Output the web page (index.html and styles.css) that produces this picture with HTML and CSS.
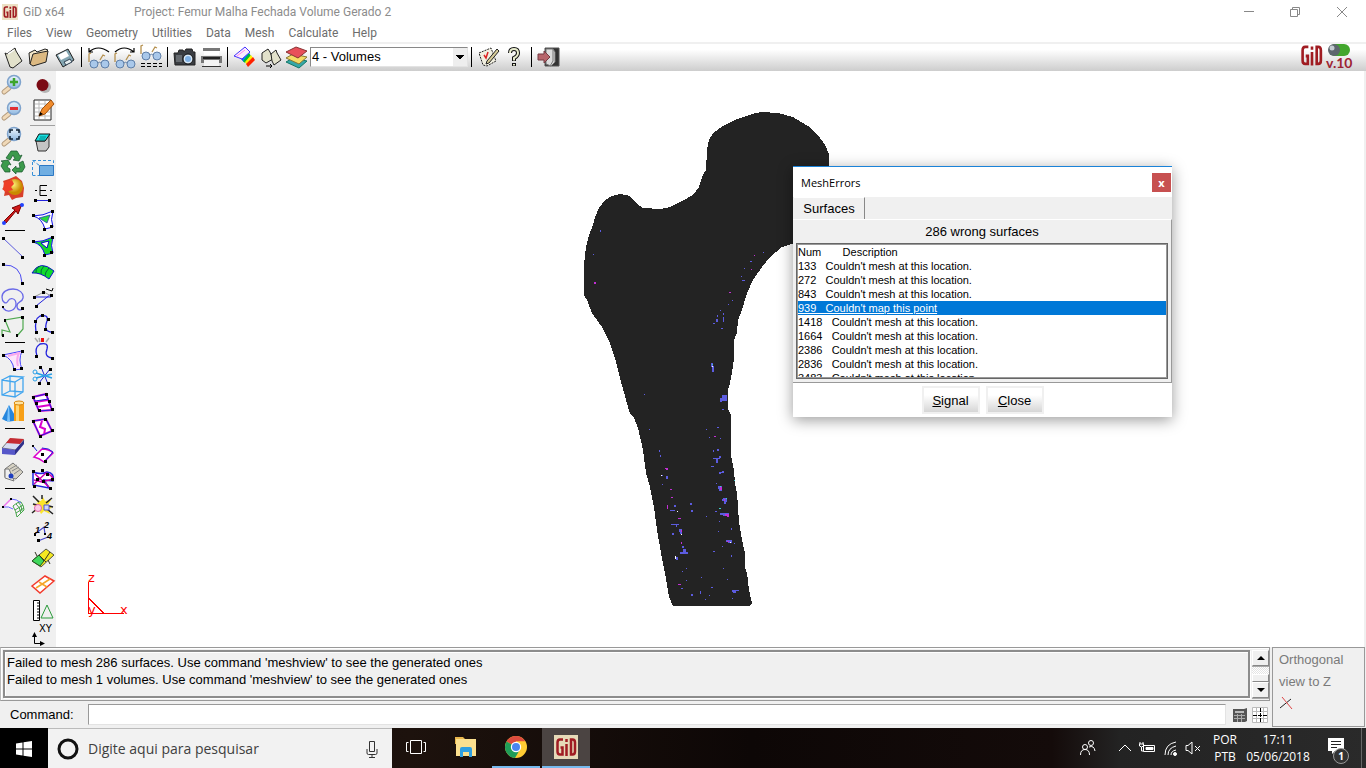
FILE: index.html
```html
<!DOCTYPE html>
<html lang="en">
<head>
  <meta charset="UTF-8">
  <meta name="viewport" content="width=device-width, initial-scale=1.0">
  <title>GiD x64</title>
  <link rel="stylesheet" href="styles.css">
</head>
<body>

<!-- Shared symbols -->
<svg class="defs" aria-hidden="true">
  <defs>
    <linearGradient id="lens" x1="0" y1="0" x2="0" y2="1">
      <stop offset="0" stop-color="#eef6fd"/><stop offset="1" stop-color="#8fb8e0"/>
    </linearGradient>
    <radialGradient id="gold" cx=".4" cy=".35">
      <stop offset="0" stop-color="#fff27a"/><stop offset="1" stop-color="#c98a00"/>
    </radialGradient>
    <symbol id="magnifier" viewBox="0 0 26 26">
      <path d="M4 21l5-4" stroke="#b39a7c" stroke-width="5" stroke-linecap="round"/>
      <path d="M4 21l5-4" stroke="#f0d9b8" stroke-width="3" stroke-linecap="round"/>
      <circle cx="14" cy="11" r="6.500" fill="url(#lens)" stroke="#7fa3cc" stroke-width="1.500"/>
    </symbol>
    <symbol id="glasses" viewBox="0 0 26 26">
      <path d="M3 15V7l2-1M14 13l3-5 2 1" fill="none" stroke="#b5904e" stroke-width="1.300"/>
      <circle cx="8" cy="17" r="4" fill="#a9c8ea" stroke="#5f7fa8"/>
      <circle cx="19" cy="17" r="4" fill="#a9c8ea" stroke="#5f7fa8"/>
      <path d="M12 16q1.500-1.500 3 0" fill="none" stroke="#5f7fa8"/>
    </symbol>
    <symbol id="gid" viewBox="0 0 24 24">
      <path d="M9 4.500H6q-2.500 0-2.500 3v9q0 3 2.500 3h2.500v-7H6.500M12.500 9v12M12.500 4v3M17 4.500v15h1.500q2.500 0 2.500-3v-9q0-3-2.500-3z" fill="none" stroke="#a01c22" stroke-width="2.500"/>
    </symbol>
  </defs>
</svg>

<header class="titlebar">
  <svg class="app-icon" viewBox="0 0 24 24"><rect width="24" height="24" fill="#ece0c4"/><use href="#gid"/></svg>
  <span class="app-name">GiD x64</span>
  <span class="project">Project: Femur Malha Fechada Volume Gerado 2</span>
  <div class="window-buttons">
    <button aria-label="Minimize"><svg viewBox="0 0 12 12"><path d="M1 5.500h10"/></svg></button>
    <button aria-label="Restore"><svg viewBox="0 0 12 12"><path d="M1.500 3.500h7v7h-7zM3.500 3.500v-2h7v7h-2"/></svg></button>
    <button aria-label="Close"><svg viewBox="0 0 12 12"><path d="M1 1l10 10M11 1L1 11"/></svg></button>
  </div>
</header>

<nav class="menubar">
  <a href="#">Files</a>
  <a href="#">View</a>
  <a href="#">Geometry</a>
  <a href="#">Utilities</a>
  <a href="#">Data</a>
  <a href="#">Mesh</a>
  <a href="#">Calculate</a>
  <a href="#">Help</a>
</nav>

<div class="toolbar">
  <button class="tool" aria-label="New"><svg viewBox="0 0 26 26"><path d="M5 9l2 1 8-6 1 3 6 10-9 7-3-1z" fill="#e2e1cb" stroke="#222"/><path d="M8 10l6-4" stroke="#fff" stroke-width="1.500"/></svg></button>
  <button class="tool" aria-label="Open"><svg viewBox="0 0 26 26"><path d="M4 20L3 9l6-3 2 2 8-3 3 1-2 2" fill="#f3e6c8" stroke="#222"/><path d="M4 20l3-10 15-3-2 11-13 4z" fill="#dcb982" stroke="#222"/></svg></button>
  <button class="tool" aria-label="Save"><svg viewBox="0 0 26 26"><path d="M4 11l12-6 6 11-11 7z" fill="#84a6b2" stroke="#222"/><path d="M6 11l8-4 3 5-8 4z" fill="#fff"/><path d="M12 18l6-3 2 3-6 3z" fill="#e6eef0" stroke="#345"/></svg></button>
  <i class="divider"></i>
  <button class="tool" aria-label="View previous"><svg viewBox="0 0 26 26"><use href="#glasses" y="3"/><path d="M3 8q9-8 20 0M3 4v4h4" fill="none" stroke="#000" stroke-width="1.200"/></svg></button>
  <button class="tool" aria-label="View next"><svg viewBox="0 0 26 26"><use href="#glasses" y="3"/><path d="M3 8q9-8 19 0M22 4v4h-4" fill="none" stroke="#000" stroke-width="1.200"/></svg></button>
  <button class="tool" aria-label="View list"><svg viewBox="0 0 26 26"><use href="#glasses" y="-5"/><path d="M3 19.500h21M3 22.500h21" stroke="#000" stroke-dasharray="4 2"/></svg></button>
  <i class="divider"></i>
  <button class="tool" aria-label="Snapshot"><svg viewBox="0 0 26 26"><path d="M2 9h4l1-3h4l1 2 2-3h6l1 3h2v13H3z" fill="#3a3d42" stroke="#222"/><path d="M4 11h6v7H4z" fill="#666b70"/><circle cx="16" cy="15" r="5" fill="#dbe9f6" stroke="#111"/><circle cx="16" cy="15" r="3" fill="#7fb0e4"/></svg></button>
  <button class="tool" aria-label="Print"><svg viewBox="0 0 26 26"><path d="M6 4h15v7H6z" fill="#fff"/><path d="M5 4h17v3H5z" fill="#777"/><path d="M3 12h21v7h-3v-3H6v3H3z" fill="#777"/><path d="M5 13h17v2H5z" fill="#222"/><path d="M6 16h15v6H6z" fill="#f4f4f4"/><path d="M4 22.500h19" stroke="#333"/></svg></button>
  <i class="divider"></i>
  <button class="tool" aria-label="Contour"><svg viewBox="0 0 26 26"><path d="M14 9l4 3q-5 6-6 6l-3-3z" fill="#21d"/><path d="M15 8l3 2-6 8-2-2z" fill="#08f"/><path d="M17 9l2 3-6 7-2-2z" fill="#0b3"/><path d="M19 11l2 3-6 7-2-3z" fill="#fe0"/><path d="M21 13l2 3-7 7-2-3z" fill="#f20"/><path d="M2 12l11-9 5 5-8 7z" fill="#fdeafd" stroke="#43f"/><path d="M5 12l8-6" stroke="#f8e"/></svg></button>
  <button class="tool" aria-label="Copy"><svg viewBox="0 0 26 26"><path d="M4 9l6-4 2 3 3 7-7 4-4-3z" fill="#e2e1cb" stroke="#222"/><path d="M13 10l5-4 1 3 4 7-7 5-2-4z" fill="#e2e1cb" stroke="#222"/><path d="M8 22h6M12 20l2 2-2 2" fill="none" stroke="#000"/></svg></button>
  <button class="tool" aria-label="Layers"><svg viewBox="0 0 26 26"><path d="M2 18l7-4 14 3-8 7z" fill="#35a7a8" stroke="#176"/><path d="M2 14l7-4 14 3-8 7z" fill="#f5dc66" stroke="#873"/><path d="M2 8l10-5 11 4-9 7z" fill="#e8505a" stroke="#833"/></svg></button>
  <select class="layer-select" aria-label="Layer"><option>4 - Volumes</option></select>
  <i class="divider"></i>
  <button class="tool" aria-label="Preferences"><svg viewBox="0 0 26 26"><path d="M3 9l12-5 5 13-9 5-4-1z" fill="#f1efe0" stroke="#222" stroke-dasharray="2 1"/><path d="M8 11l2 3 2-6" fill="none" stroke="#d22" stroke-width="1.500"/><path d="M21 5L11 17l-1 3 3-1L23 7z" fill="#d6cb98" stroke="#222"/></svg></button>
  <button class="tool" aria-label="Help"><svg viewBox="0 0 26 26"><path d="M8 9q0-4 4-4t4 4q0 3-4 5v3M12 19v3" fill="none" stroke="#111" stroke-width="4"/><path d="M8 9q0-4 4-4t4 4q0 3-4 5v2.500M12 20v1.500" fill="none" stroke="#e8eccd" stroke-width="2"/></svg></button>
  <i class="divider"></i>
  <button class="tool" aria-label="Exit"><svg viewBox="0 0 26 26"><path d="M9 4h14v18H9z" fill="#333" stroke="#555"/><path d="M10 5h7l2 3v10l-4 4-5-2z" fill="#ddd" stroke="#777"/><path d="M17 5v12l-3 5" fill="none" stroke="#777"/><path d="M2 10h6V7l6 6-6 6v-3H2z" fill="#b7656b" stroke="#743b42"/></svg></button>
  <div class="brand">
    <svg viewBox="0 0 56 28"><svg width="24" height="26" viewBox="1 1 23 23" preserveAspectRatio="none"><use href="#gid" width="24" height="24"/></svg>
      <rect x="29" y="1" width="21" height="12" rx="6" fill="#42a62c"/><circle cx="34" cy="7" r="6" fill="#5d666d"/><circle cx="32" cy="5" r="2.500" fill="#c4ccd1"/>
      <text x="26" y="25">v.10</text></svg>
  </div>
</div>

<main class="workspace">
  <aside class="palette">
    <div class="palette-col">
      <button class="tool" aria-label="Zoom in"><svg viewBox="0 0 26 26"><use href="#magnifier"/><path d="M10 11h8M14 7v8" stroke="#3da52c" stroke-width="2.500"/></svg></button>
      <button class="tool" aria-label="Zoom out"><svg viewBox="0 0 26 26"><use href="#magnifier"/><path d="M10 11.500h8" stroke="#e03034" stroke-width="3"/></svg></button>
      <button class="tool" aria-label="Zoom frame"><svg viewBox="0 0 26 26"><use href="#magnifier"/><path d="M10 10V7h3M16 7h3v3M19 13v3h-3M13 16h-3v-3" fill="none" stroke="#123" stroke-width="1.500"/></svg></button>
      <button class="tool" aria-label="Redraw"><svg viewBox="0 0 26 26"><g fill="#3c9a4c" stroke="#14552a" stroke-width=".7"><path d="M6 9l5-7h6l3 5 2-1-3 6-6-1 2-1-2-4-3 5z"/><path d="M23 12l2 6-3 5h-6v2l-4-4 4-4v2h4l-1-5z"/><path d="M10 23H5l-4-6 2-4-2-1 7-1 3 5-2-1-2 3 3 2z"/></g></svg></button>
      <button class="tool" aria-label="Render"><svg viewBox="0 0 26 26"><path d="M3 6l6-2 7-3 6 5 2 7-1 9-7 1-4 2-3-5-5 1 1-5-3-2 3-3z" fill="#d8402a"/><circle cx="15" cy="12" r="8" fill="url(#gold)"/><path d="M4 7l8-2 2 4-3 3 2 3-8 2-2-3z" fill="#ee3f28"/></svg></button>
      <button class="tool" aria-label="Rotate"><svg viewBox="0 0 26 26"><path d="M4 20L15 9l-3-2 10-4-4 10-2-3L6 22z" fill="#d01818" stroke="#700"/><circle cx="4" cy="22" r="2" fill="#24f"/><circle cx="22" cy="4" r="2" fill="#24f"/></svg></button>
      <hr>
      <button class="tool" aria-label="Line"><svg viewBox="0 0 26 26"><path d="M3 3l20 19" stroke="#5b5bdc"/><path d="M2 2h3v3H2zM21 21h3v3h-3z"/></svg></button>
      <button class="tool" aria-label="Arc"><svg viewBox="0 0 26 26"><path d="M3 4q18-1 19 18" fill="none" stroke="#4a4af0"/><path d="M2 2h3v3H2zM21 21h3v3h-3z"/></svg></button>
      <button class="tool" aria-label="Curve"><svg viewBox="0 0 26 26"><path d="M3 21C8 27 16 23 16 17S10 10 8 14 2 15 2 10 7 2 13 2s11 4 10 9-6 3-6 8 4 4 6 3" fill="none" stroke="#6a6ae8" stroke-width="1.300"/><path d="M2 19h2v2H2zM21 20h3v3h-3z"/></svg></button>
      <button class="tool" aria-label="Polyline"><svg viewBox="0 0 26 26"><path d="M17 23l6-7V4L5 7l5 12-8-2v6" fill="none" stroke="#4fa84f" stroke-width="1.200"/><path d="M2 21h2v3H2zM16 21h2v3h-2zM4 6h2v3H4zM21 3h3v3h-3z"/></svg></button>
      <hr>
      <button class="tool" aria-label="Surface"><svg viewBox="0 0 26 26"><path d="M3 8l19-4q-4 9 0 18l-8 1Q13 12 3 8z" fill="#fce6fb"/><path d="M3 8l19-4q-4 9 0 18l-8 1Q13 12 3 8z" fill="none" stroke="#44f"/><path d="M8 9l11-3q-3 6-1 13" fill="none" stroke="#f8a8ee" stroke-width="2"/><path d="M2 7h3v3H2zM21 3h3v3h-3zM13 21h3v3h-3zM20 20h3v3h-3z"/></svg></button>
      <button class="tool" aria-label="Volume"><svg viewBox="0 0 26 26"><path d="M2 7l13 2v15L2 22zM2 7l8-4 13 1-8 5M23 4v15l-8 5M10 3v15l13 1M10 18l-8 4" fill="none" stroke="#41a5ee" stroke-width="1.300"/></svg></button>
      <button class="tool" aria-label="Solids"><svg viewBox="0 0 26 26"><path d="M2 20L9 6l8 14q-7 5-15 0z" fill="#2686dd"/><path d="M8 9l1-3 1 16-3 1z" fill="#7cc3fa"/><path d="M14 4h10v18H14z" fill="#f7a018"/><path d="M16 4h3v18h-3z" fill="#ffd676"/><ellipse cx="19" cy="4" rx="5" ry="2" fill="#ffe3a0" stroke="#d8860b"/></svg></button>
      <hr>
      <button class="tool" aria-label="Delete"><svg viewBox="0 0 26 26"><path d="M2 15l8-9 14 1-8 10z" fill="#d7dcf2" stroke="#777"/><path d="M10 5l14 1-4 5-14-1z" fill="#c62c33"/><path d="M2 15l13 2v5L2 21z" fill="#5657c9"/><path d="M15 17l9-10v4l-9 11z" fill="#30318c"/></svg></button>
      <button class="tool" aria-label="Label"><svg viewBox="0 0 26 26"><path d="M5 10l8-6 10 9-7 7-11-2z" fill="#d6d2c4" stroke="#777"/><path d="M10 10l7-4M12 12l7-4M14 15l7-5" stroke="#888"/><path d="M5 10h4l5 12-9-3z" fill="#eee" stroke="#777"/><circle cx="11" cy="17" r="2.500" fill="#1f3fc0"/></svg></button>
      <hr>
      <button class="tool" aria-label="Generate mesh"><svg viewBox="0 0 26 26"><path d="M3 14l8-8q7 0 13 9l-7 9Q11 13 3 14z" fill="#fdf1fc"/><path d="M13 13q6-5 8-4 3 4 3 8l-7 7q-1-6-4-11zM15 17l8-5M16 20l8-5M16 11q4 3 5 9M18 9q4 3 4 9" fill="none" stroke="#43a548"/><path d="M3 14q6-1 10 2M11 6q6 0 10 4" fill="none" stroke="#66f"/><path d="M3 14l8-8" stroke="#e7e" stroke-width="1.500"/><path d="M2 13h2v2H2zM10 5h2v2h-2z"/></svg></button>
    </div>
    <div class="palette-col">
      <button class="tool" aria-label="Point"><svg viewBox="0 0 26 26"><circle cx="15" cy="16" r="6" fill="#b5b5b5"/><circle cx="12.500" cy="14" r="6" fill="#7b0b14"/></svg></button>
      <button class="tool" aria-label="Edit"><svg viewBox="0 0 26 26"><path d="M4 3h17v20H4z" fill="#fff" stroke="#222"/><path d="M5 7h15M5 11h15M5 15h15M5 19h15M9 4v18M15 4v18" stroke="#bbb"/><path d="M9 19l3-7L21 3l3 4-9 10z" fill="#f08b2c" stroke="#a3510a"/><path d="M9 19l1-4 3 2z"/></svg></button>
      <hr class="light">
      <button class="tool" aria-label="Book"><svg viewBox="0 0 26 26"><path d="M6 12h9l4-6v12l-3 4H8z" fill="#c4c4c4" stroke="#333"/><path d="M9 5h11l-5 7H5z" fill="#17dfe0" stroke="#111"/><path d="M10 8h6M9 10h6" stroke="#088"/></svg></button>
      <button class="tool" aria-label="Selection"><svg viewBox="0 0 26 26"><path d="M2.500 20V5.500h21V12M2.500 5.500l7 5M2.500 20.500h8" fill="none" stroke="#3590da" stroke-dasharray="3 2"/><path d="M9.500 10.500h14v10h-14z" fill="#70aee2" stroke="#2c78c4"/></svg></button>
      <button class="tool" aria-label="Dimension"><svg viewBox="0 0 26 26"><path d="M17 4.500H10v10h7M10 9.500h6M5 9.500h2M20 9.500h2" fill="none" stroke="#000"/><path d="M5 19.500h15" stroke="#22d"/><path d="M4 18h3v3H4zM18 18h3v3h-3z"/></svg></button>
      <button class="tool" aria-label="Hole"><svg viewBox="0 0 26 26"><path d="M3 9q10 0 20-5-3 9 0 16l-8 2Q12 11 3 9z" fill="#fff" stroke="#11e"/><path d="M9 11l11-3-3 8z" fill="#27d83b" stroke="#22c" stroke-width=".7"/><path d="M2 7h3v3H2zM21 3h3v3h-3zM13 21h3v3h-3zM20 18h3v3h-3z"/></svg></button>
      <button class="tool" aria-label="Fill hole"><svg viewBox="0 0 26 26"><path d="M3 9q10 0 20-5-3 9 0 16l-8 2Q12 11 3 9z" fill="#17d82b" stroke="#11e"/><path d="M11 10l8-2-2 7z" fill="#fff" stroke="#00c"/><path d="M2 7h3v3H2zM21 3h3v3h-3zM13 21h3v3h-3zM20 18h3v3h-3z"/></svg></button>
      <button class="tool" aria-label="Parallel surface"><svg viewBox="0 0 26 26"><path d="M2 14Q10 0 24 12l-5 8Q10 13 2 14z" fill="#0fdb2c" stroke="#11c"/><path d="M9 7q-4 4-3 7M14 7q-4 4-3 8M19 9q-4 4-4 8" fill="none" stroke="#064"/></svg></button>
      <button class="tool" aria-label="Move point"><svg viewBox="0 0 26 26"><path d="M4 12h17M6 21L21 9" fill="none" stroke="#22d"/><path d="M4 12l10-5 7 4" fill="none" stroke="#999"/><path d="M16 4l6 2 1-3" fill="none" stroke="#000"/><path d="M3 11h3v3H3zM12 6h3v3h-3zM20 9h3v3h-3zM5 20h3v3H5z"/></svg></button>
      <button class="tool" aria-label="Nurbs line"><svg viewBox="0 0 26 26"><path d="M6 21q-2-13 4-16 9-2 7 5-4 11 5 11" fill="none" stroke="#22d" stroke-width="1.300"/><path d="M4 9h3v3H4zM5 20h3v3H5zM11 3h3v3h-3zM17 7h3v3h-3zM14 17h3v3h-3zM21 20h3v3h-3z"/></svg></button>
      <button class="tool" aria-label="Split line"><svg viewBox="0 0 26 26"><path d="M5 1l3 4M9 1l1 4M19 1l-3 4" stroke="#aaa" stroke-width="1.500"/><path d="M7 19q-3-8 3-12 9-2 7 5-3 8 5 9" fill="none" stroke="#22d" stroke-width="1.300"/><path d="M11 1h3v4h-3z" fill="#e11"/><path d="M5 18h3v3H5zM21 20h3v3h-3z"/></svg></button>
      <button class="tool" aria-label="Divide"><svg viewBox="0 0 26 26"><path d="M11 4l7 17M20 6L9 20" stroke="#22c"/><path d="M6 10l16 5M6 15l16-4" stroke="#2aa0e8" stroke-width="1.500"/><circle cx="5" cy="9" r="2" fill="none" stroke="#2aa0e8"/><circle cx="5" cy="16" r="2" fill="none" stroke="#2aa0e8"/><path d="M9 3h3v3H9zM19 5h3v3h-3zM8 19h3v3H8zM17 19h3v3h-3z"/></svg></button>
      <button class="tool" aria-label="Strips"><svg viewBox="0 0 26 26"><path d="M3 8l13-3 6 16-13 1zM5 13l13-2M7 18l13-2" fill="#fff" stroke="#d0c" stroke-width="2"/><path d="M3 8l13-3 6 16-13 1zM5 12l14-2" fill="none" stroke="#22d"/><path d="M2 7h3v3H2zM15 4h3v3h-3zM5 13h3v3H5zM21 19h3v3h-3zM8 20h3v3H8zM18 11h3v3h-3z"/></svg></button>
      <button class="tool" aria-label="Divide surface"><svg viewBox="0 0 26 26"><path d="M3 6l13-2 6 12-12 5zM12 6l-2 6 5 2-1 6" fill="#fff" stroke="#d0c" stroke-width="2"/><path d="M3 6l13-2 6 12-12 5z" fill="none" stroke="#22d"/><path d="M2 5h3v3H2zM14 3h3v3h-3zM21 14h3v3h-3zM9 20h3v3H9z"/></svg></button>
      <button class="tool" aria-label="Surface point"><svg viewBox="0 0 26 26"><path d="M4 16l8-8q7 0 11 4l-9 9q-5-4-10-5z" fill="#fff" stroke="#d0c" stroke-width="1.500"/><path d="M3 5l4 5M12 7q7 0 11 4l-9 10" fill="none" stroke="#22d"/><path d="M2 4h2v2H2zM11 12h3v3h-3zM14 19h3v3h-3z"/></svg></button>
      <button class="tool" aria-label="Intersect"><svg viewBox="0 0 26 26"><path d="M3 5q8 3 14 0 8 1 6 9l-9-1 5 8-16-3z" fill="#fff" stroke="#22d" stroke-width="1.500"/><path d="M4 17L16 6q6 2 7 6l-11 3-8-2M5 7l14 13" fill="none" stroke="#c0a" stroke-width="1.500"/><path d="M2 3h3v3H2zM11 2h3v3h-3zM16 6h3v3h-3zM6 11h3v3H6zM3 18h3v3H3zM12 13h3v3h-3zM19 20h3v3h-3zM21 11h3v3h-3z"/></svg></button>
      <button class="tool" aria-label="Collapse"><svg viewBox="0 0 26 26"><path d="M6 7l5 1 2-4 2 4 6-1-3 5 4 3-4 1 2 5-6-3-3 3-2-4-5 2 3-5-4-2 5-2z" fill="#fbe52a"/><path d="M3 3l6 6M22 5l-6 5M2 20l6-5M23 21l-6-5M12 2v4M3 11l4 1M19 13l4 1" stroke="#222" stroke-width="1.500"/><circle cx="8" cy="15" r="3.500" fill="#fbc9e8" stroke="#d6a"/><path d="M14 12h5v5h-5z" fill="#cdd7fb" stroke="#55c"/></svg></button>
      <button class="tool" aria-label="Renumber"><svg viewBox="0 0 26 26"><path d="M5 15l9-7 1 7M8 22l10-4" fill="none" stroke="#44c" stroke-width="1.200"/><path d="M4 14h2v3H4zM14 14h2v2h-2zM7 20h3v3H7z"/><text class="num" x="5" y="14">1</text><text class="num" x="14" y="9">2</text><text class="num" x="17" y="20">4</text></svg></button>
      <button class="tool" aria-label="Materials"><svg viewBox="0 0 26 26"><path d="M2 16L16 4l8 6-13 12z" fill="#f4e920" stroke="#554"/><path d="M2 16l7-6 5 6-4 5z" fill="#3fd85c" stroke="#252"/><path d="M9 10l7 7M5 7l2 4M20 7l-6 9M18 15l2 4" fill="none" stroke="#332"/></svg></button>
      <button class="tool" aria-label="Conditions"><svg viewBox="0 0 26 26"><path d="M2 15L15 5l9 5-14 12z" fill="#fff" stroke="#f33a2c" stroke-width="1.500"/><path d="M9 11l8 5M6 17l14-9" stroke="#f5a62a" stroke-width="1.500"/></svg></button>
      <button class="tool" aria-label="Measure"><svg viewBox="0 0 26 26"><path d="M3.500 3.500h6v20h-6z" fill="#fff" stroke="#000"/><path d="M7 6h3M7 9h3M7 12h3M7 15h3M7 18h3M7 21h3" stroke="#000"/><path d="M17 8l6 13H11z" fill="none" stroke="#2a9a3a"/></svg></button>
      <button class="tool" aria-label="View XY"><svg viewBox="0 0 26 26"><text class="xy" x="9" y="9">XY</text><path d="M4.500 13v7.500h7" fill="none" stroke="#000"/><path d="M2 14l2.500-5 2.500 5zM10 18l5 2.500-5 2.500z"/></svg></button>
    </div>
  </aside>

  <section class="viewport">
    <svg class="scene" viewBox="56 71 1308 576" shape-rendering="crispEdges">
      <path fill="#232323" d="M584 264L586 247 589 235 593 225 595 217 599 208 605 200 612 196 620 194 630 196 637 204 643 208 660 209 670 207 682 201 693 195 699 187 703 175 706 170 707 150 709 140 713 133 723 126 737 119 752 114 761 112 778 113 793 117 808 126 818 135 825 145 829 154 829 200 810 236 792 244 782 247 770 257 762 267 753 280 747 293 742 310 738 320 737 333 734 340 734 358 732 373 730 383 728 390 728 409 731 415 731 455 734 470 735 483 737 493 739 522 742 540 745 553 745 567 747 573 749 590 752 603 750 606 673 606 669 597 665 573 661 553 657 530 654 507 650 487 646 473 643 450 638 428 634 418 630 414 621 382 615 358 610 343 602 327 592 313 587 300 584 295z"/>
      <!-- wrong surfaces -->
      <path fill="#5c5cdf" d="M711 363h2v3h1v6h-2v-5h-1zM722 395h5v6h-5v1h-2v-4h2zM713 458h7v1h-2v4h-2v-4h-3zM713 450h1v2h-1zM717 449h2v2h-2zM719 456h2v2h-2zM722 471h2v2h-3v1h-2v-2h3zM711 466h3v1h-3zM723 498h4v4h-1v2h-2v-3h-2zM718 486h4v5h-3zM720 513h9v3h-6v-1h-3zM726 540h6v3h-4v-1h-2zM732 590h7v1h-3v2h-3v-1h-1zM679 529h3v5h-2v-2h-1zM683 549h3v3h2v2h-8v-2h3zM675 557h3v3h-2v-1h-1zM671 524h8v1h-2v2h-1v-2h-5zM672 533h2v2h-2zM670 510h5v1h-5zM674 505h2v2h-2zM666 476h2v3h-2zM661 475h2v1h-2zM659 450h1v2h-1zM660 455h1v2h-1zM662 484h1v1h-1zM690 503h2v2h-2zM691 510h2v2h-2zM717 315h1v2h-1zM716 319h2v3h-2zM723 313h1v2h-1zM723 317h1v5h-1zM721 328h2v1h-2zM713 323h2v1h-2zM720 310h1v1h-1zM728 304h1v1h-1zM732 300h1v1h-1zM741 276h1v1h-1zM744 268h1v1h-1zM742 280h3v1h-3zM750 261h2v1h-2zM763 252h1v1h-1zM600 230h1v2h-1zM593 254h1v1h-1zM644 394h1v1h-1zM649 429h1v1h-1zM706 429h1v1h-1zM717 427h2v1h-2zM722 409h2v1h-2zM709 437h1v1h-1zM720 438h1v1h-1zM716 483h1v1h-1zM715 511h2v1h-2zM706 516h1v1h-1zM719 521h1v1h-1zM731 528h1v2h-1zM718 531h1v1h-1zM713 551h2v1h-2zM722 546h1v1h-1zM734 543h1v1h-1zM731 555h1v2h-1zM723 568h1v1h-1zM727 579h1v1h-1zM701 577h1v1h-1zM682 571h1v1h-1zM686 568h1v1h-1zM686 580h1v1h-1zM691 594h2v2h-2zM700 591h1v3h-1zM711 587h2v1h-2zM709 595h1v1h-1zM705 599h1v1h-1zM732 598h1v1h-1zM681 588h2v1h-2zM682 546h2v2h-2z"/>
      <path fill="#c22fd4" d="M594 282h2v2h-2zM754 255h1v1h-1zM751 269h1v1h-1zM729 292h2v1h-2zM714 436h2v1h-2zM720 487h2v3h-2zM725 514h4v3h-2v-1h-2zM665 468h3v2h-2v-1h-1zM670 489h2v1h-2zM671 497h2v1h-2zM667 505h1v4h-1zM678 518h3v1h-3zM681 530h1v2h-1zM678 584h3v1h-3zM681 542h1v2h-1zM727 541h2v1h-2zM724 499h1v2h-1z"/>
      <path fill="#fff" d="M661 475h1v1h-1zM677 511h1v1h-1zM681 534h1v1h-1zM675 556h1v3h-1zM730 542h1v1h-1zM712 366h1v1h-1z"/>
      <path fill="#3ed0cc" d="M712 364h1v1h-1zM720 486h1v1h-1zM719 508h2v1h-2zM726 498h1v1h-1zM734 480h1v1h-1z"/>
      <g class="axes">
        <path d="M88.500 582v31h35M88.500 598l15 15"/>
        <text x="88" y="582">z</text><text x="88" y="614">y</text><text x="120" y="614">x</text>
      </g>
    </svg>
  </section>
</main>

<footer class="console">
  <div class="console-main">
    <div class="messages">
      <div class="message-log">
        <p>Failed to mesh 286 surfaces. Use command 'meshview' to see the generated ones</p>
        <p>Failed to mesh 1 volumes. Use command 'meshview' to see the generated ones</p>
      </div>
      <div class="scrollbar">
        <button aria-label="Scroll up"><svg viewBox="0 0 8 4"><path d="M0 4l4-4 4 4z"/></svg></button>
        <span class="thumb"></span>
        <button aria-label="Scroll down"><svg viewBox="0 0 8 4"><path d="M0 0h8L4 4z"/></svg></button>
      </div>
    </div>
    <div class="command-row">
      <label for="command">Command:</label>
      <input id="command" type="text">
      <button aria-label="Keypad"><svg viewBox="0 0 16 16"><path d="M1 2h11l3-1v13l-2 1H1z" fill="#555"/><path d="M3 4h9v2H3z" fill="#bbb"/><path d="M2 8.500h11M2 11.500h11M5.500 7v8M9.500 7v8" stroke="#aaa"/></svg></button>
      <button aria-label="Grid"><svg viewBox="0 0 16 16"><path d="M.5.5h15v15H.5zM4.500 0v16M11.500 0v16M0 4.500h16M0 11.500h16" fill="#fff" stroke="#bbb"/><path d="M8.500 1v14M1 8.500h14" stroke="#000" stroke-dasharray="4 1"/></svg></button>
    </div>
  </div>
  <div class="view-info">
    <p>Orthogonal</p>
    <p>view to Z</p>
    <svg viewBox="0 0 14 14"><path d="M1 12L12 3" stroke="#222"/><path d="M3 1l10 12" stroke="#d44"/></svg>
  </div>
</footer>

<div class="taskbar">
  <button class="start" aria-label="Start"><svg viewBox="0 0 16 16"><path d="M0 2.500l6.500-1v6H0zM7.500 1.300L16 0v7.500H7.500zM0 8.500h6.500v6L0 13.500zM7.500 8.500H16V16l-8.500-1.300z" fill="#fff"/></svg></button>
  <div class="search">
    <svg class="cortana" viewBox="0 0 22 22"><circle cx="11" cy="11" r="9" fill="none" stroke="#111" stroke-width="3"/></svg>
    <input type="text" aria-label="Pesquisar" placeholder="Digite aqui para pesquisar">
    <svg class="mic" viewBox="0 0 12 18"><path d="M3.500 1.500h5v10h-5zM1 9v4q0 1.500 1.500 1.500h7q1.500 0 1.500-1.500V9M6 14.500V17M3 17.500h6" fill="none" stroke="#333"/></svg>
  </div>
  <button class="task" aria-label="Task view"><svg viewBox="0 0 22 22"><path d="M5.500 4.500h11v13h-11zM3.500 6.500h-2v9h2M18.500 6.500h2v9h-2" fill="none" stroke="#fff"/></svg></button>
  <button class="task" aria-label="Explorer"><svg viewBox="0 0 22 22"><path d="M0 1h8l2 2h10v5H0z" fill="#e8b64c"/><path d="M1 3h20v17H1z" fill="#fbe08f"/><path d="M5 21v-8q0-2 2-2h8q2 0 2 2v8h-3v-5H8v5z" fill="#2f9fe0"/></svg></button>
  <button class="task open" aria-label="Chrome"><svg viewBox="0 0 22 22"><circle cx="11" cy="11" r="11" fill="#fc3"/><path d="M11 11L1.500 5.500A11 11 0 0 1 20.500 5.500H11z" fill="#dd4b3e"/><path d="M1.500 5.500A11 11 0 0 0 10 22l5-8.500-4-2.500z" fill="#1f9d58"/><path d="M20.500 5.500H11v6l4 2z" fill="#fc3"/><circle cx="11" cy="11" r="5.200" fill="#fff"/><circle cx="11" cy="11" r="4" fill="#4a86f0"/></svg></button>
  <button class="task open active" aria-label="GiD"><svg viewBox="0 0 24 24"><rect width="24" height="24" fill="#e6dab8"/><use href="#gid"/></svg></button>
  <div class="tray">
    <svg viewBox="0 0 18 18"><circle cx="6" cy="8" r="2.500"/><path d="M1.500 16q0-5.500 4.500-5.500t4.500 5.500"/><circle cx="12" cy="4" r="2.500"/><path d="M10 8q5-2 6 4"/></svg>
    <svg viewBox="0 0 18 18"><path d="M4 12l6-6 6 6"/></svg>
    <svg viewBox="0 0 18 18"><path d="M5.500 6.500h11v6h-11z"/><path d="M8 8.500h7v2H8z" fill="#fff"/><path d="M1 5h5M2 3v2M5 3v2M1.500 5v2q2 2 4 0V5M3.500 8v4h2"/></svg>
    <svg viewBox="0 0 18 18"><path d="M4 16Q4 5 15 3M7 16q0-7 8-9M10 16q0-4 5-5"/><circle cx="14" cy="15" r="1.500" fill="#fff"/></svg>
    <svg viewBox="0 0 18 18"><path d="M2 6.500h2l4-3.500v12l-4-3.500H2zM11 7l5 5M16 7l-5 5"/></svg>
    <span class="stack lang">POR<br>PTB</span>
    <span class="stack clock">17:11<br>05/06/2018</span>
    <button class="notify" aria-label="Notifications"><svg viewBox="0 0 24 24"><path d="M1 2h16v13H8l-3 3v-3H1z" fill="#fff" stroke="none"/><path d="M4 5.500h10M4 8.500h10M4 11.500h6" stroke="#222"/></svg><b class="badge">1</b></button>
  </div>
</div>

<!-- Mesh errors window -->
<div class="dialog" role="dialog" aria-labelledby="dialog-title">
  <div class="dialog-head">
    <span id="dialog-title">MeshErrors</span>
    <button class="dialog-close" aria-label="Close window">x</button>
  </div>
  <div class="tabs"><button class="tab">Surfaces</button></div>
  <div class="dialog-body">
    <p class="summary">286 wrong surfaces</p>
    <ul class="error-list">
      <li>Num       Description</li>
      <li>133   Couldn't mesh at this location.</li>
      <li>272   Couldn't mesh at this location.</li>
      <li>843   Couldn't mesh at this location.</li>
      <li class="selected"><u>939   Couldn't map this point</u></li>
      <li>1418   Couldn't mesh at this location.</li>
      <li>1664   Couldn't mesh at this location.</li>
      <li>2386   Couldn't mesh at this location.</li>
      <li>2836   Couldn't mesh at this location.</li>
      <li>3483   Couldn't mesh at this location.</li>
    </ul>
  </div>
  <div class="dialog-actions">
    <button><u>S</u>ignal</button>
    <button><u>C</u>lose</button>
  </div>
</div>

</body>
</html>
```
FILE: styles.css
```css
* {
  box-sizing: border-box;
}

body {
  display: flex;
  flex-direction: column;
  height: 100vh;
  margin: 0;
  overflow: hidden;
  background: #fff;
  color: #000;
  font-family: "Liberation Sans", Arial, sans-serif;
  font-size: 13px;
}

p {
  margin: 0;
}

button {
  padding: 0;
  border: none;
  background: none;
  font: inherit;
  color: inherit;
}

.defs {
  position: absolute;
  width: 0;
  height: 0;
}

/* Title bar */
.titlebar {
  display: flex;
  align-items: center;
  height: 23px;
  padding-left: 2px;
  color: #8c8c8c;
  font-family: Roboto, sans-serif;
  font-size: 12px;
}

.app-icon {
  width: 16px;
  height: 16px;
}

.app-name {
  width: 111px;
  margin-left: 5px;
}

.window-buttons {
  display: flex;
  margin-left: auto;
}

.window-buttons button {
  display: flex;
  align-items: center;
  justify-content: center;
  width: 46px;
  height: 20px;
}

.window-buttons svg {
  width: 12px;
  height: 12px;
  fill: none;
  stroke: #888;
}

.window-buttons button:last-child {
  width: 48px;
}

/* Menu */
.menubar {
  display: flex;
  align-items: center;
  gap: 14px;
  height: 19px;
  padding-left: 7px;
  font-family: Roboto, sans-serif;
  font-size: 12px;
}

.menubar a {
  color: #6d6d6d;
  text-decoration: none;
}

/* Toolbar */
.toolbar {
  display: flex;
  align-items: center;
  height: 29px;
  padding-bottom: 2px;
  border-top: 2px solid #f0f0f0;
  background: linear-gradient(#fff 20%, #cdcdcd);
}

.tool {
  flex: none;
  width: 26px;
  height: 26px;
}

.tool svg {
  display: block;
  width: 26px;
  height: 26px;
}

.divider {
  width: 1px;
  height: 20px;
  margin: 0 4px 0 3px;
  background: #000;
}

.layer-select {
  width: 158px;
  height: 20px;
  padding: 0 1px;
  border: 1px solid #e3e3e3;
  border-top-color: #888;
  border-left-color: #888;
  border-radius: 0;
  appearance: none;
  background:
    linear-gradient(45deg, transparent 50%, #000 50%) right 7px top 7px / 4px 4px no-repeat,
    linear-gradient(-45deg, transparent 50%, #000 50%) right 3px top 7px / 4px 4px no-repeat,
    linear-gradient(90deg, #eee, #eee) right / 14px 100% no-repeat,
    #fff;
  color: #000;
  font: 13px "Liberation Sans", Arial, sans-serif;
}

.brand {
  margin-left: auto;
  padding-right: 10px;
}

.brand svg {
  display: block;
  width: 56px;
  height: 28px;
}

.brand > svg > svg {
  width: 24px;
  height: 26px;
}

.brand text {
  fill: #9d2433;
  font: bold 14px Lato, sans-serif;
}

/* Workspace */
.workspace {
  display: flex;
  flex: 1;
  min-height: 0;
}

.palette {
  display: flex;
  gap: 4px;
  overflow: hidden;
  background: #f0f0f0;
}

.palette-col {
  display: flex;
  flex-direction: column;
  width: 26px;
}

.palette hr {
  flex: none;
  width: 20px;
  height: 1px;
  margin: 3px 0 4px 5px;
  border: none;
  background: #000;
}

.palette hr.light {
  width: 25px;
  margin: 2px 0 3px;
  background: #a0a0a0;
}

.num {
  font: italic bold 9px "Liberation Sans", sans-serif;
}

.xy {
  font: 10px "DejaVu Sans", sans-serif;
}

.viewport {
  flex: 1;
  min-width: 0;
  border-right: 2px solid #f0f0f0;
}

.scene {
  display: block;
  width: 100%;
  height: 100%;
}

.axes path {
  fill: none;
  stroke: #f00;
}

.axes text {
  fill: #f00;
  font: 13px "DejaVu Sans", sans-serif;
}

/* Message area */
.console {
  display: flex;
  height: 81px;
  gap: 2px;
  padding-right: 1px;
  background: #f0f0f0;
}

.console-main {
  display: flex;
  flex: 1;
  flex-direction: column;
}

.messages {
  display: flex;
  gap: 2px;
  height: 54px;
  padding: 2px 0 2px 2px;
  border: 1px solid #999;
  border-left-color: #bbb;
  background: #f0f0f0;
  box-shadow: inset 1px 1px #fff;
}

.message-log {
  flex: 1;
  padding: 2px;
  border: 2px solid #8c8c8c;
  line-height: 17px;
  box-shadow: inset 1px 1px #fff, 1px 1px #fff;
}

.scrollbar {
  display: flex;
  flex-direction: column;
  width: 17px;
  background: repeating-conic-gradient(#fff 0 25%, #e4e4e4 0 50%) 0 0 / 2px 2px;
}

.scrollbar button,
.thumb {
  display: flex;
  align-items: center;
  justify-content: center;
  height: 16px;
  border: 1px solid #fff;
  border-right-color: #888;
  border-bottom-color: #888;
  background: #f0f0f0;
  box-shadow: 0 1px #aaa;
}

.scrollbar svg {
  width: 8px;
  height: 4px;
}

.thumb {
  height: 8px;
  margin-top: auto;
}

.command-row {
  display: flex;
  flex: 1;
  align-items: center;
  gap: 4px;
  padding: 0 2px 0 10px;
}

.command-row label {
  width: 74px;
}

.command-row input {
  flex: 1;
  height: 21px;
  margin-right: 2px;
  border: 1px solid #e3e3e3;
  border-top-color: #999;
  border-left-color: #999;
  background: #fff;
}

.command-row button,
.command-row svg {
  display: block;
  width: 16px;
  height: 16px;
}

.view-info {
  width: 93px;
  margin-bottom: 1px;
  padding: 1px 6px;
  border: 1px solid #999;
  color: #7a7a7a;
  line-height: 22px;
}

.view-info svg {
  display: block;
  width: 14px;
  height: 14px;
  margin-top: 3px;
}

/* Taskbar */
.taskbar {
  display: flex;
  flex: none;
  height: 40px;
  background: linear-gradient(90deg, #0c0a09, #1d120d 30%, #0d0706 55%, #140b0a 77%, #232323 82%, #2a2a2a);
  color: #fff;
  font-family: "Open Sans", sans-serif;
}

.start {
  width: 48px;
  background: #000;
}

.start svg {
  width: 16px;
  height: 16px;
  vertical-align: middle;
}

.search {
  display: flex;
  align-items: center;
  width: 344px;
  padding: 0 14px 0 9px;
  border-top: 1px solid #bbb;
  background: #f2f2f2;
}

.search input {
  flex: 1;
  min-width: 0;
  padding: 0 9px;
  border: none;
  background: none;
  font: 14px "Open Sans", sans-serif;
}

.search input::placeholder {
  color: #404040;
}

.cortana {
  width: 22px;
  height: 22px;
}

.mic {
  width: 12px;
  height: 18px;
}

.task {
  width: 48px;
  margin-right: 2px;
  border-bottom: 2px solid transparent;
}

.task svg {
  width: 22px;
  height: 22px;
  vertical-align: middle;
}

.task.open {
  border-bottom-color: #76b9ed;
}

.task.active {
  background: #4b4442;
}

.task.active svg {
  width: 24px;
  height: 24px;
}

.tray {
  display: flex;
  align-items: center;
  gap: 5px;
  margin-left: auto;
  margin-right: 4px;
  border-right: 1px solid #666;
}

.tray svg {
  width: 18px;
  height: 18px;
  fill: none;
  stroke: #fff;
}

.tray > svg:first-child {
  margin-right: 13px;
}

.stack {
  font-size: 12px;
  line-height: 17px;
  text-align: center;
}

.lang {
  width: 30px;
  margin-left: 3px;
}

.clock {
  width: 66px;
}

.notify {
  position: relative;
  width: 45px;
  height: 40px;
}

.tray .notify svg {
  width: 24px;
  height: 24px;
  vertical-align: middle;
}

.badge {
  position: absolute;
  right: 12px;
  bottom: 4px;
  width: 16px;
  height: 16px;
  border: 1px solid #999;
  border-radius: 50%;
  background: #333;
  font-size: 10px;
  line-height: 14px;
}

/* Mesh errors window */
.dialog {
  position: absolute;
  top: 166px;
  left: 793px;
  width: 379px;
  border-top: 1px solid #1a82d8;
  background: #fff;
  box-shadow: 0 3px 14px rgba(0, 0, 0, 0.4);
}

.dialog-head {
  display: flex;
  align-items: center;
  justify-content: space-between;
  height: 30px;
  padding: 0 1px 0 8px;
  font-family: "Open Sans", sans-serif;
  font-size: 11px;
}

.dialog-close {
  width: 19px;
  height: 19px;
  background: #c75050;
  color: #fff;
  font-weight: bold;
  line-height: 17px;
}

.tabs {
  height: 22px;
  padding-left: 1px;
  background: #f0f0f0;
}

.tab {
  width: 71px;
  height: 22px;
  border-top: 1px solid #fff;
  border-right: 1px solid #888;
}

.dialog-body {
  padding: 0 3px 3px;
  border: 1px solid #999;
  border-top-color: #fff;
  border-left: none;
  background: #f0f0f0;
}

.summary {
  height: 23px;
  line-height: 24px;
  text-align: center;
}

.error-list {
  height: 136px;
  margin: 0;
  padding: 0;
  overflow: hidden;
  border: 1px solid #666;
  outline: 1px solid #999;
  outline-offset: -2px;
  background: #fff;
  list-style: none;
  font-size: 11px;
  line-height: 14px;
}

.error-list li {
  margin: 0 1px;
  white-space: pre;
}

.error-list li:first-child {
  margin-top: 1px;
}

.error-list .selected {
  background: #0078d7;
  color: #fff;
}

.dialog-actions {
  display: flex;
  justify-content: center;
  gap: 6px;
  height: 34px;
  padding-top: 3px;
}

.dialog-actions button {
  width: 58px;
  height: 28px;
  border: 2px solid #f0f0f0;
  background: linear-gradient(#fff 30%, #d6d6d6);
}
```
